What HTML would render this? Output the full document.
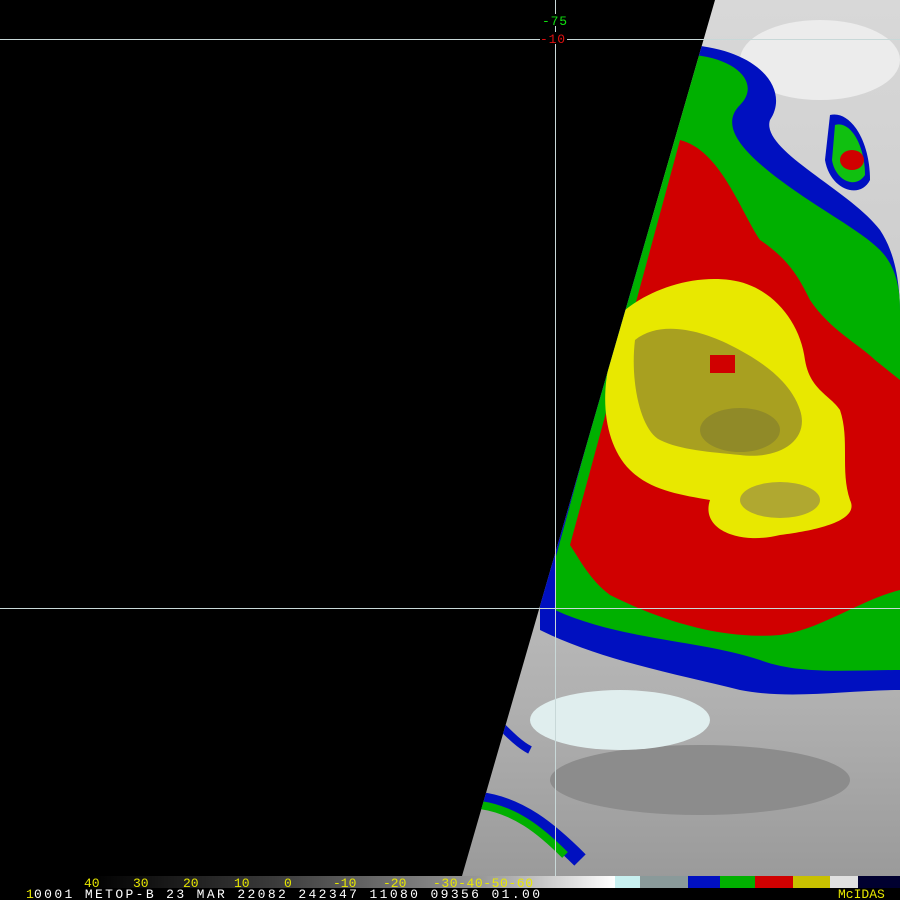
<!DOCTYPE html>
<html><head><style>
html,body{margin:0;padding:0;background:#000;width:900px;height:900px;overflow:hidden}
svg{display:block}
text{font-family:"Liberation Mono",monospace}
</style></head><body>
<svg width="900" height="900" viewBox="0 0 900 900">
<defs>
<clipPath id="sw"><polygon points="715,0 900,0 900,876 462,876"/></clipPath>
<linearGradient id="bar" x1="0" x2="1">
<stop offset="0" stop-color="#000"/>
<stop offset="0.35" stop-color="#3a3a3a"/>
<stop offset="0.75" stop-color="#9a9a9a"/>
<stop offset="1" stop-color="#ffffff"/>
</linearGradient>
<linearGradient id="bg" x1="0" y1="0" x2="0" y2="1">
<stop offset="0" stop-color="#d8d8d8"/>
<stop offset="0.5" stop-color="#c8c8c8"/>
<stop offset="0.8" stop-color="#b0b0b0"/>
<stop offset="1" stop-color="#9a9a9a"/>
</linearGradient>
</defs>
<rect width="900" height="900" fill="#000"/>
<g clip-path="url(#sw)">
<rect x="450" y="0" width="450" height="880" fill="url(#bg)"/>
<ellipse cx="820" cy="60" rx="80" ry="40" fill="#ececec"/>
<ellipse cx="700" cy="780" rx="150" ry="35" fill="#8c8c8c"/>
<ellipse cx="620" cy="720" rx="90" ry="30" fill="#e0eeee"/>
<!-- blue outer -->
<path d="M690,45 C760,50 790,90 770,120 C760,150 850,190 880,230 C900,260 900,300 900,320 L900,690 C850,690 790,700 740,690 C680,675 600,660 540,630 L540,590 L700,60 Z" fill="#0010c0"/>
<path d="M830,115 C850,110 870,140 870,180 C860,200 830,190 825,160 Z" fill="#0010c0"/>
<!-- green -->
<path d="M695,55 C740,60 760,85 740,105 C720,125 740,150 780,180 C820,210 860,230 880,250 C900,270 900,300 900,310 L900,670 C850,670 800,675 760,660 C700,640 620,640 555,610 L555,560 L690,65 Z" fill="#00b000"/>
<path d="M835,125 C850,120 865,145 865,175 C855,190 835,180 832,160 Z" fill="#10c010"/>
<!-- red -->
<path d="M680,140 C720,150 740,210 760,240 C790,260 800,280 810,300 C830,330 860,345 875,360 L900,380 L900,590 C860,600 820,630 780,635 C720,640 660,620 610,595 C590,580 580,560 570,545 L680,140 Z" fill="#d00000"/>
<ellipse cx="852" cy="160" rx="12" ry="10" fill="#d00000"/>
<!-- yellow -->
<path d="M625,310 C650,290 690,275 730,280 C770,285 800,320 805,360 C810,390 830,395 840,410 C850,440 840,470 850,500 C860,520 820,530 780,535 C740,545 700,530 710,500 C680,495 650,490 630,470 C605,445 600,400 610,360 Z" fill="#e8e800"/>
<!-- olive -->
<path d="M635,340 C660,320 700,330 730,345 C760,360 790,380 800,410 C810,440 780,460 740,455 C710,452 680,450 660,440 C640,430 630,380 635,340 Z" fill="#a8a020"/>
<ellipse cx="740" cy="430" rx="40" ry="22" fill="#908a28"/>
<ellipse cx="780" cy="500" rx="40" ry="18" fill="#b0a830"/>
<rect x="710" y="355" width="25" height="18" fill="#d00000"/>
<!-- bottom bands -->
<path d="M480,800 C520,805 550,830 580,860" stroke="#0010c0" stroke-width="16" fill="none"/>
<path d="M480,805 C515,810 540,830 565,855" stroke="#00b000" stroke-width="8" fill="none"/>
<path d="M500,725 C510,735 520,745 530,750" stroke="#0010c0" stroke-width="8" fill="none"/>
</g>
<!-- grid lines -->
<line x1="0" y1="39.5" x2="900" y2="39.5" stroke="#c8d8d8" stroke-width="1"/>
<line x1="0" y1="608.5" x2="900" y2="608.5" stroke="#c8d8d8" stroke-width="1"/>
<line x1="555.5" y1="0" x2="555.5" y2="876" stroke="#c8d8d8" stroke-width="1"/>
<rect x="540" y="14" width="30" height="12" fill="#000"/>
<rect x="540" y="32" width="27" height="12" fill="#000"/>
<text x="542" y="25" fill="#10e010" font-size="13" textLength="25">-75</text>
<text x="540" y="43" fill="#e01010" font-size="13" textLength="25">-10</text>
<!-- color bar -->
<rect x="0" y="876" width="900" height="24" fill="#000"/>
<rect x="90" y="876" width="525" height="12" fill="url(#bar)"/>
<rect x="615" y="876" width="25" height="12" fill="#c8f0f0"/>
<rect x="640" y="876" width="48" height="12" fill="#8a9a9a"/>
<rect x="688" y="876" width="32" height="12" fill="#0010c0"/>
<rect x="720" y="876" width="35" height="12" fill="#00b000"/>
<rect x="755" y="876" width="38" height="12" fill="#d00000"/>
<rect x="793" y="876" width="37" height="12" fill="#c8c000"/>
<rect x="830" y="876" width="28" height="12" fill="#e0e0e0"/>
<rect x="858" y="876" width="42" height="12" fill="#000030"/>
<g fill="#e8e800" font-size="13">
<text x="84" y="887">40</text><text x="133" y="887">30</text><text x="183" y="887">20</text>
<text x="234" y="887">10</text><text x="284" y="887">0</text><text x="333" y="887">-10</text>
<text x="383" y="887">-20</text><text x="433" y="887" textLength="100">-30-40-50-60</text>
<text x="838" y="898">McIDAS</text>
<text x="26" y="898">1</text>
</g>
<text x="34" y="898" fill="#fff" font-size="13" textLength="506">0001 METOP-B     23 MAR 22082 242347 11080 09356 01.00</text>
</svg>
</body></html>
